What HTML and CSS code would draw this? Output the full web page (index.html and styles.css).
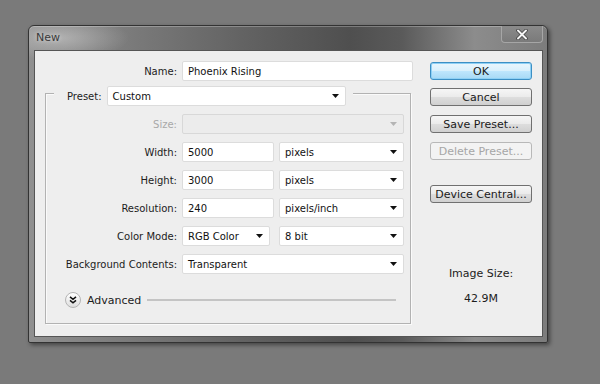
FILE: index.html
```html
<!DOCTYPE html>
<html lang="en">
<head>
    <meta charset="UTF-8">
    <title>New</title>
    <link rel="stylesheet" href="styles.css">
</head>
<body>
    <div class="window">
        <div class="titlebar">
            <span class="title">New</span>
            <div class="close">
                <svg width="14" height="11" viewBox="0 0 14 11">
                    <path d="M3 1.5 L11 9.5 M11 1.5 L3 9.5" stroke="#3a3a3a" stroke-width="3.4" stroke-linecap="round"/>
                    <path d="M3 1.5 L11 9.5 M11 1.5 L3 9.5" stroke="#f4f4f4" stroke-width="2" stroke-linecap="round"/>
                </svg>
            </div>
        </div>

        <div class="client">
            <div class="main">
                <div class="name-row">
                    <label class="name-label" for="docName">Name:</label>
                    <input type="text" id="docName" class="field name-field" value="Phoenix Rising">
                </div>

                <div class="groupbox">
                    <div class="legend">
                        <span class="legend-label">Preset:</span>
                        <div class="dropdown preset">
                            <span>Custom</span>
                            <svg class="arrow" width="7" height="4" viewBox="0 0 7 4"><path d="M0 0 H7 L3.5 4 Z" fill="#111"/></svg>
                        </div>
                    </div>

                    <div class="row">
                        <span class="lbl disabled">Size:</span>
                        <div class="dropdown wide off">
                            <span></span>
                            <svg class="arrow" width="7" height="4" viewBox="0 0 7 4"><path d="M0 0 H7 L3.5 4 Z" fill="#b4b4b4"/></svg>
                        </div>
                    </div>

                    <div class="row">
                        <span class="lbl">Width:</span>
                        <input type="text" class="field num" value="5000">
                        <div class="dropdown unit">
                            <span>pixels</span>
                            <svg class="arrow" width="7" height="4" viewBox="0 0 7 4"><path d="M0 0 H7 L3.5 4 Z" fill="#111"/></svg>
                        </div>
                    </div>

                    <div class="row">
                        <span class="lbl">Height:</span>
                        <input type="text" class="field num" value="3000">
                        <div class="dropdown unit">
                            <span>pixels</span>
                            <svg class="arrow" width="7" height="4" viewBox="0 0 7 4"><path d="M0 0 H7 L3.5 4 Z" fill="#111"/></svg>
                        </div>
                    </div>

                    <div class="row">
                        <span class="lbl">Resolution:</span>
                        <input type="text" class="field num" value="240">
                        <div class="dropdown unit">
                            <span>pixels/inch</span>
                            <svg class="arrow" width="7" height="4" viewBox="0 0 7 4"><path d="M0 0 H7 L3.5 4 Z" fill="#111"/></svg>
                        </div>
                    </div>

                    <div class="row">
                        <span class="lbl">Color Mode:</span>
                        <div class="dropdown mode">
                            <span>RGB Color</span>
                            <svg class="arrow" width="7" height="4" viewBox="0 0 7 4"><path d="M0 0 H7 L3.5 4 Z" fill="#111"/></svg>
                        </div>
                        <div class="dropdown bits">
                            <span>8 bit</span>
                            <svg class="arrow" width="7" height="4" viewBox="0 0 7 4"><path d="M0 0 H7 L3.5 4 Z" fill="#111"/></svg>
                        </div>
                    </div>

                    <div class="row">
                        <span class="lbl">Background Contents:</span>
                        <div class="dropdown wide">
                            <span>Transparent</span>
                            <svg class="arrow" width="7" height="4" viewBox="0 0 7 4"><path d="M0 0 H7 L3.5 4 Z" fill="#111"/></svg>
                        </div>
                    </div>

                    <div class="advanced">
                        <span class="expander">
                            <svg width="8" height="8" viewBox="0 0 8 8">
                                <path d="M1 0.8 L4 3.3 L7 0.8 M1 4.3 L4 6.8 L7 4.3" fill="none" stroke="#111" stroke-width="1.5"/>
                            </svg>
                        </span>
                        <span>Advanced</span>
                        <span class="rule"></span>
                    </div>
                </div>
            </div>

            <div class="side">
                <button class="btn default">OK</button>
                <button class="btn">Cancel</button>
                <button class="btn">Save Preset...</button>
                <button class="btn" disabled>Delete Preset...</button>
                <button class="btn gap">Device Central...</button>

                <p class="size-title">Image Size:</p>
                <p class="size-value">42.9M</p>
            </div>
        </div>
    </div>
</body>
</html>
```

FILE: styles.css
```css
body {
    margin: 0;
    padding: 25px 0 0 28px;
    background: #7a7a7a;
    font-family: "DejaVu Sans", Tahoma, sans-serif;
    font-size: 10px;
    color: #1c1c1c;
    height: 384px;
    box-sizing: border-box;
}
.window {
    width: 520px;
    height: 318px;
    box-sizing: border-box;
    border: 1px solid #333;
    border-radius: 6px 6px 2px 2px;
    padding: 0 4px 5px 5px;
    background:
        radial-gradient(ellipse 70px 22px at 30px 12px, rgba(210, 210, 210, 0.55), rgba(210, 210, 210, 0) 100%),
        linear-gradient(to right, #909090 0%, #7a7a7a 20%, #626262 42%, #4f4f4f 62%, #5a5a5a 72%, #8c8c8c 86%, #7c7c7c 100%);
    box-shadow: 2px 2px 4px rgba(0, 0, 0, 0.45), inset 0 1px 0 rgba(255, 255, 255, 0.25);
}
.titlebar {
    height: 24px;
    display: flex;
    align-items: flex-start;
}
.title {
    margin: 5px 0 0 2px;
    font-size: 11px;
    color: #3a3a3a;
    text-shadow: 0 0 4px rgba(255, 255, 255, 0.6);
}
.close {
    margin-left: auto;
    width: 40px;
    height: 16px;
    border: 1px solid #a6a6a6;
    border-top: none;
    border-radius: 0 0 4px 4px;
    background: linear-gradient(#8a8a8a, #7a7a7a);
    display: flex;
    align-items: center;
    justify-content: center;
}
.client {
    height: 287px;
    box-sizing: border-box;
    border: 1px solid #555;
    background: #eeeeee;
    padding-top: 10px;
    display: flex;
}
.main {
    width: 380px;
}
.name-row {
    display: flex;
    align-items: center;
}
.name-label {
    width: 142px;
    margin-right: 5px;
    text-align: right;
}
.field {
    height: 20px;
    box-sizing: border-box;
    border: 1px solid #dcdcdc;
    border-radius: 2px;
    background: #fff;
    padding: 0 5px;
    font: inherit;
    color: #111;
    outline: none;
}
.name-field {
    width: 231px;
}
.groupbox {
    margin: 12px 0 0 10px;
    width: 366px;
    height: 231px;
    box-sizing: border-box;
    border: 1px solid #b2b2b2;
    box-shadow: inset 1px 1px 0 #fafafa, 1px 1px 0 #fafafa;
}
.legend {
    display: flex;
    width: fit-content;
    align-items: center;
    margin: -8px 0 0 8px;
    padding: 0 7px 0 13px;
    background: #eeeeee;
}
.legend-label {
    margin-right: 5px;
}
.dropdown {
    height: 20px;
    box-sizing: border-box;
    border: 1px solid #dcdcdc;
    border-radius: 2px;
    background: #fff;
    display: flex;
    align-items: center;
    justify-content: space-between;
    padding: 0 6px 0 5px;
    color: #111;
}
.dropdown.off {
    background: #ececec;
    border-color: #d8d8d8;
}
.arrow {
    flex: none;
}
.preset {
    width: 239px;
}
.row {
    display: flex;
    align-items: center;
    margin-top: 8px;
}
.lbl {
    width: 131px;
    margin-right: 5px;
    text-align: right;
}
.lbl.disabled {
    color: #a8a8a8;
}
.wide {
    width: 222px;
}
.num {
    width: 92px;
    margin-right: 5px;
}
.unit {
    width: 125px;
}
.mode {
    width: 88px;
    margin-right: 9px;
}
.bits {
    width: 125px;
}
.advanced {
    display: flex;
    align-items: center;
    margin: 18px 14px 0 19px;
    font-size: 11px;
}
.expander {
    width: 16px;
    height: 16px;
    box-sizing: border-box;
    border: 1px solid #b4b4b4;
    border-radius: 50%;
    background: linear-gradient(#ffffff, #dedede);
    display: flex;
    align-items: center;
    justify-content: center;
    margin-right: 6px;
}
.rule {
    flex: 1;
    height: 2px;
    background: #c4c4c4;
    margin-left: 6px;
}
.side {
    margin-left: 15px;
    width: 102px;
    padding-top: 1px;
    display: flex;
    flex-direction: column;
}
.btn {
    width: 102px;
    height: 18px;
    box-sizing: border-box;
    border: 1px solid #707070;
    border-radius: 3px;
    background: linear-gradient(#f6f6f6 0%, #ebebeb 48%, #dddddd 52%, #d0d0d0 100%);
    font: inherit;
    font-size: 11px;
    color: #1a1a1a;
    padding: 0;
    margin-bottom: 9px;
    line-height: 15px;
}
.btn.default {
    border-color: #3c8fc4;
    background: linear-gradient(#eaf6fd 0%, #d9f0fc 48%, #bee6fd 52%, #a7d9f5 100%);
    box-shadow: 0 0 0 1px #8ed0f5 inset;
    margin-bottom: 8px;
}
.btn:disabled {
    border-color: #b8b8b8;
    background: #f3f3f3;
    color: #a6a6a6;
}
.btn.gap {
    margin-top: 16px;
}
.size-title {
    margin: 55px 0 0;
    text-align: center;
    font-size: 11px;
    line-height: 14px;
}
.size-value {
    margin: 11px 0 0;
    text-align: center;
    font-size: 11px;
    line-height: 14px;
}
```
